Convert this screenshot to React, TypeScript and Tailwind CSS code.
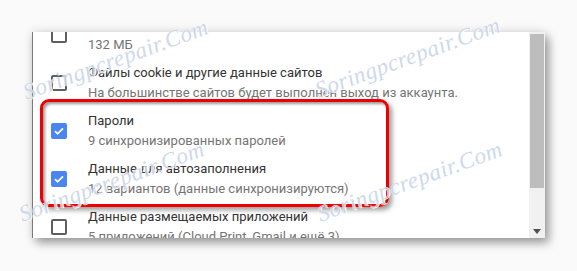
const rows = [
  { title: "\u00a0", sub: "132 МБ", checked: false },
  { title: "Файлы cookie и другие данные сайтов", sub: "На большинстве сайтов будет выполнен выход из аккаунта.", checked: false },
  { title: "Пароли", sub: "9 синхронизированных паролей", checked: true },
  { title: "Данные для автозаполнения", sub: "12 вариантов (данные синхронизируются)", checked: true },
  { title: "Данные размещаемых приложений", sub: "5 приложений (Cloud Print, Gmail и ещё 3)", checked: false },
];

function Box({ checked }: { checked: boolean }) {
  if (checked) {
    return (
      <span className="flex h-[16px] w-[16px] shrink-0 items-center justify-center rounded-[2px] bg-[#4a86f0]">
        <svg width="12" height="12" viewBox="0 0 12 12" fill="none">
          <path d="M2 6.2l2.6 2.6L10 3.4" stroke="#fff" strokeWidth="1.8" />
        </svg>
      </span>
    );
  }
  return <span className="h-[16px] w-[16px] shrink-0 rounded-[2px] border-2 border-[#5f5f5f]" />;
}

// watermark spots
const marks = [
  { left: 18, top: 48 },
  { left: 310, top: 46 },
  { left: 14, top: 170 },
  { left: 312, top: 170 },
];

export default function App() {
  return (
    <div className="relative h-[271px] w-[577px] overflow-hidden bg-[#fafafa] pl-[32px] pt-[32px] font-['Roboto',sans-serif]">
      <div className="flex h-[206px] w-[513px] border-l border-[#7a7a7a] bg-white shadow-[4px_5px_9px_rgba(0,0,0,0.35),0_0_10px_rgba(0,0,0,0.12)]">
        <div className="flex-1 overflow-hidden">
          <div className="-mt-[21px]">
            {rows.map((r) => (
              <div key={r.sub} className="flex h-[48px] items-center pl-[18px]">
                <Box checked={r.checked} />
                <div className="ml-[21px] text-[13px] leading-[20px]">
                  <div className="text-[#333]">{r.title}</div>
                  <div className="text-[#757575]">{r.sub}</div>
                </div>
              </div>
            ))}
          </div>
        </div>
        <div className="flex w-[16px] flex-col bg-[#f1f1f1] px-[1px] pt-[2px]">
          <div className="h-[154px] bg-[#bdbdbd]" />
          <div className="flex flex-1 items-end justify-center pb-[4px]">
            <svg width="8" height="5" viewBox="0 0 8 5">
              <path d="M0 0h8L4 5z" fill="#505050" />
            </svg>
          </div>
        </div>
      </div>

      {/* red highlight */}
      <div className="absolute left-[40px] top-[99px] h-[108px] w-[349px] rounded-[9px] border-[3px] border-[#ee0000] shadow-[3px_3px_5px_rgba(0,0,0,0.4),inset_2px_2px_3px_rgba(0,0,0,0.4)]" />

      {/* watermark */}
      {marks.map((m) => (
        <span
          key={m.left + "-" + m.top}
          className="pointer-events-none absolute -rotate-[20deg] font-['Liberation_Serif',serif] text-[23px] italic leading-none tracking-[0.5px] text-[#c9d5ea] opacity-90 [text-shadow:0_0_1px_#fff,1px_1px_0_#fff]"
          style={{ left: m.left, top: m.top }}
        >
          Soringpcrepair.Com
        </span>
      ))}
    </div>
  );
}
